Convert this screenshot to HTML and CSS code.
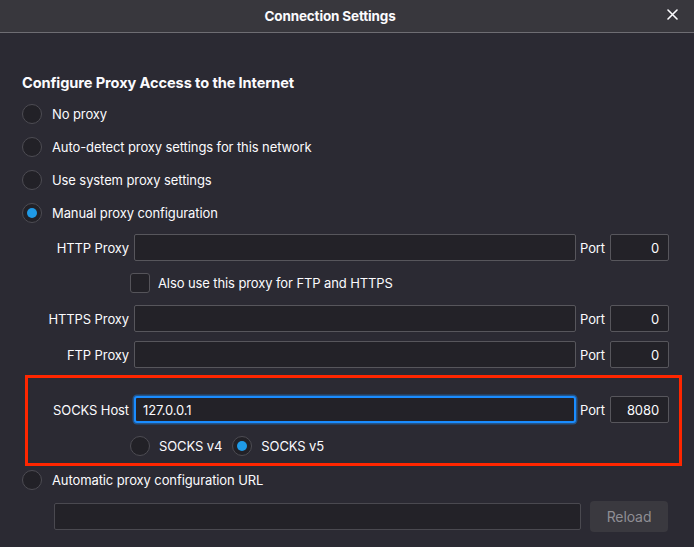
FILE: index.html
```html
<!DOCTYPE html>
<html>
<head>
<meta charset="utf-8">
<link rel="stylesheet" href="styles.css">
</head>
<body>
<div class="titlebar">
  <span class="title">Connection Settings</span>
  <span class="close">
    <svg width="11" height="11" viewBox="0 0 11 11"><path d="M1 1L10 10M10 1L1 10" stroke="#fbfbfe" stroke-width="1.6" stroke-linecap="round"/></svg>
  </span>
</div>
<div class="content">
  <h1 class="heading">Configure Proxy Access to the Internet</h1>
  <div class="radios">
    <label class="radio-row"><span class="radio"></span><span>No proxy</span></label>
    <label class="radio-row"><span class="radio"></span><span>Auto-detect proxy settings for this network</span></label>
    <label class="radio-row"><span class="radio"></span><span>Use system proxy settings</span></label>
    <label class="radio-row"><span class="radio checked"></span><span>Manual proxy configuration</span></label>
  </div>

  <div class="field-row first">
    <span class="field-label">HTTP Proxy</span>
    <span class="input host"></span>
    <span class="port-label">Port</span>
    <span class="input port">0</span>
  </div>
  <div class="check-row">
    <span class="checkbox"></span><span>Also use this proxy for FTP and HTTPS</span>
  </div>
  <div class="field-row https">
    <span class="field-label">HTTPS Proxy</span>
    <span class="input host"></span>
    <span class="port-label">Port</span>
    <span class="input port">0</span>
  </div>
  <div class="field-row ftp">
    <span class="field-label">FTP Proxy</span>
    <span class="input host"></span>
    <span class="port-label">Port</span>
    <span class="input port">0</span>
  </div>

  <div class="highlight">
    <div class="field-row socks">
      <span class="field-label">SOCKS Host</span>
      <span class="input host focused">127.0.0.1</span>
      <span class="port-label">Port</span>
      <span class="input port">8080</span>
    </div>
    <div class="socks-versions">
      <label class="radio-row"><span class="radio"></span><span>SOCKS v4</span></label>
      <label class="radio-row"><span class="radio checked"></span><span>SOCKS v5</span></label>
    </div>
  </div>

  <label class="radio-row auto"><span class="radio"></span><span>Automatic proxy configuration URL</span></label>
  <div class="url-row">
    <span class="input url"></span>
    <span class="button">Reload</span>
  </div>
</div>
</body>
</html>
```
FILE: styles.css
```css
* { box-sizing: border-box; }
html, body { margin: 0; padding: 0; }
body {
  width: 694px;
  height: 547px;
  overflow: hidden;
  background: #2b2a33;
  color: #fbfbfe;
  font-family: Inter, "Noto Sans", sans-serif;
  font-size: 13px;
  letter-spacing: -0.1px;
}
.titlebar {
  height: 33px;
  background: #38373d;
  border-bottom: 1px solid #6e6d73;
  display: flex;
  align-items: center;
  justify-content: center;
  padding-right: 34px;
  position: relative;
}
.title {
  font-weight: 700;
  font-size: 13.5px;
  letter-spacing: -0.15px;
  margin-top: -1px;
}
.close {
  position: absolute;
  right: 16px;
  top: 9px;
  display: flex;
}
.content {
  padding-left: 22px;
}
.heading {
  margin: 40px 0 0;
  font-size: 14.6px;
  line-height: 20px;
  font-weight: 700;
}
.radios {
  display: flex;
  flex-direction: column;
  gap: 13px;
  margin-top: 11px;
}
.radio-row {
  display: flex;
  align-items: center;
  gap: 10px;
  height: 20px;
  line-height: 20px;
}
.radio {
  width: 20px;
  height: 20px;
  border-radius: 50%;
  background: #222127;
  border: 1px solid #4d4c53;
  display: flex;
  align-items: center;
  justify-content: center;
  flex: none;
}
.radio.checked::after {
  content: "";
  width: 10px;
  height: 10px;
  border-radius: 50%;
  background: #1f9ae6;
}
.field-row {
  display: flex;
  align-items: center;
  height: 27px;
}
.field-row.first { margin-top: 11px; }
.field-row.https { margin-top: 12px; }
.field-row.ftp { margin-top: 9px; }
.field-label {
  width: 107px;
  text-align: right;
  margin-right: 5px;
  white-space: nowrap;
}
.input {
  height: 27px;
  background: #232228;
  border: 1px solid #57565c;
  border-radius: 2px;
  display: flex;
  align-items: center;
}
.input.host {
  width: 442px;
  padding-left: 8px;
}
.port-label {
  width: 26px;
  margin: 0 4px;
}
.input.port {
  width: 59px;
  justify-content: flex-end;
  padding-right: 9px;
}
.check-row {
  display: flex;
  align-items: center;
  gap: 8px;
  height: 20px;
  margin-top: 12px;
  margin-left: 108px;
}
.checkbox {
  width: 20px;
  height: 20px;
  border: 1px solid #55545a;
  border-radius: 3px;
  background: #232228;
}
.highlight {
  margin: 7px 0 0 3px;
  width: 657px;
  border: 3px solid #ff2600;
  padding: 18px 0 7px;
}
.field-row.socks .field-label {
  width: 101px;
}
.input.focused {
  border: 2px solid #1a8cff;
  box-shadow: 0 0 0 1.5px #23548a;
  border-radius: 3px;
  padding-left: 7px;
}
.socks-versions {
  display: flex;
  gap: 10px;
  margin: 13px 0 0 102px;
}
.socks-versions .radio-row { gap: 9px; }
.radio-row.auto {
  margin-top: 4px;
}
.url-row {
  display: flex;
  align-items: center;
  margin: 11px 0 0 32px;
  gap: 9px;
}
.input.url {
  width: 527px;
  border-color: #4a4950;
}
.button {
  width: 78px;
  height: 31px;
  background: #3a393f;
  border-radius: 4px;
  color: #8f8e94;
  display: flex;
  align-items: center;
  justify-content: center;
  font-size: 14px;
}
```
